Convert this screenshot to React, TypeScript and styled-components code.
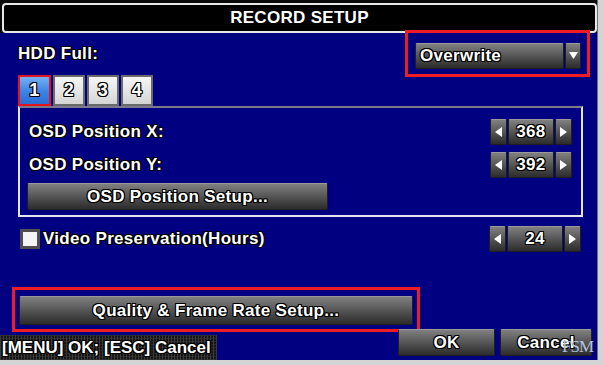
import styled, { createGlobalStyle } from "styled-components";

const GlobalStyle = createGlobalStyle`
  body {
    margin: 0;
    background: #d4d4d4;
  }
`;

const outline = `
  color: #fff;
  text-shadow: -1px 0 #000, 1px 0 #000, 0 -1px #000, 0 1px #000,
    1px 1px #000, -1px -1px #000, 1px -1px #000, -1px 1px #000;
`;

const Frame = styled.div`
  width: 604px;
  height: 365px;
  background: #d4d4d4;
  position: relative;
  overflow: hidden;
  font-family: "Liberation Sans", Arial, sans-serif;
  font-weight: bold;
  font-size: 17px;
  letter-spacing: 0.3px;
  white-space: nowrap;
`;

const Window = styled.div`
  width: 598px;
  height: 360px;
  background: #000080;
  display: flex;
  flex-direction: column;
  border-right: 1px solid #707070;
  box-sizing: border-box;
`;

const TitleBar = styled.div`
  background: #0a0a0a;
  padding: 3px 0 0 2px;
`;

const TitleBox = styled.div`
  height: 30px;
  box-sizing: border-box;
  border: 2px solid #e8e8e8;
  border-radius: 4px;
  background: #000;
  display: flex;
  align-items: center;
  justify-content: center;
  font-size: 17px;
  ${outline}
`;

const Row = styled.div<{ $top?: number; $left?: number; $right?: number }>`
  display: flex;
  align-items: center;
  justify-content: space-between;
  margin-top: ${(p) => p.$top ?? 0}px;
  padding-left: ${(p) => p.$left ?? 0}px;
  padding-right: ${(p) => p.$right ?? 0}px;
`;

const Label = styled.span`
  ${outline}
`;

const Highlight = styled.div<{ $pad: string }>`
  border: 3px solid #ee1c24;
  padding: ${(p) => p.$pad};
  position: relative;
  z-index: 1;
`;

const buttonFace = `
  background: linear-gradient(#808080 0%, #626262 35%, #444 70%, #2c2c2c 100%);
  border: 1px solid #1e1e1e;
  border-top-color: #9a9a9a;
  border-radius: 2px;
  box-sizing: border-box;
`;

const Dropdown = styled.div`
  width: 166px;
  height: 26px;
  display: flex;
  gap: 1px;
`;

const DropValue = styled.div`
  ${buttonFace}
  flex: 1;
  display: flex;
  align-items: center;
  padding-left: 4px;
  ${outline}
`;

const DropArrow = styled.div`
  ${buttonFace}
  width: 16px;
  display: flex;
  align-items: center;
  justify-content: center;
`;

const Tabs = styled.div`
  display: flex;
  gap: 2px;
  margin: -2px 0 0 18px;
  height: 31px;
  position: relative;
  z-index: 2;
`;

const Tab = styled.div<{ $active?: boolean }>`
  width: ${(p) => (p.$active ? 33 : 32)}px;
  box-sizing: border-box;
  border: 2px solid ${(p) => (p.$active ? "#e3141c" : "#6a6a6a")};
  background: ${(p) =>
    p.$active
      ? "linear-gradient(#74b0f4, #3f86e6 50%, #2a6cd4)"
      : "linear-gradient(#f6f6f6, #e2e2e2 60%, #d4d4d4)"};
  display: flex;
  align-items: center;
  justify-content: center;
  font-size: 18px;
  ${outline}
`;

const Panel = styled.div`
  margin-left: 18px;
  width: 565px;
  box-sizing: border-box;
  border: 2px solid #e4e4f0;
  border-top-color: #7a7a8a;
  padding: 11px 9px 5px 7px;
  display: flex;
  flex-direction: column;
`;

const PanelRow = styled.div<{ $gap?: number }>`
  display: flex;
  align-items: center;
  justify-content: space-between;
  height: 26px;
  margin-bottom: ${(p) => p.$gap ?? 0}px;
  padding-left: 2px;
`;

const Spinner = styled.div`
  display: flex;
  gap: 1px;
  height: 26px;
`;

const SpinArrow = styled.div`
  ${buttonFace}
  width: 17px;
  display: flex;
  align-items: center;
  justify-content: center;
`;

const SpinValue = styled.div<{ $w: number }>`
  ${buttonFace}
  width: ${(p) => p.$w}px;
  display: flex;
  align-items: center;
  justify-content: center;
  ${outline}
`;

const Button = styled.div<{ $w: number; $h: number }>`
  ${buttonFace}
  width: ${(p) => p.$w}px;
  height: ${(p) => p.$h}px;
  display: flex;
  align-items: center;
  justify-content: center;
  ${outline}
`;

const CheckLabel = styled.div`
  display: flex;
  align-items: center;
  gap: 3px;
`;

const Checkbox = styled.div`
  width: 20px;
  height: 20px;
  box-sizing: border-box;
  border: 3px solid #4e4e4e;
  background: #f4f4f4;
`;

const BottomRow = styled.div`
  display: flex;
  margin-top: -3px;
  height: 31px;
  padding-right: 5px;
`;

const Status = styled.div`
  align-self: flex-end;
  width: 217px;
  height: 25px;
  box-sizing: border-box;
  padding-left: 2px;
  display: flex;
  align-items: center;
  letter-spacing: 0;
  background-color: #161616;
  background-image: repeating-linear-gradient(90deg, #3a3a3a 0 1px, transparent 1px 3px),
    repeating-linear-gradient(0deg, #2a2a2a 0 1px, transparent 1px 3px);
  ${outline}
`;

const Actions = styled.div`
  margin-left: auto;
  display: flex;
  gap: 5px;
  align-items: flex-start;
  position: relative;
  z-index: 2;
`;

const Watermark = styled.span`
  position: absolute;
  right: 11px;
  bottom: 8px;
  font-family: "Liberation Serif", serif;
  font-weight: normal;
  font-size: 17px;
  letter-spacing: -1px;
  color: #b4c2de;
  z-index: 3;
`;

const Tri = ({ dir }: { dir: "left" | "right" | "down" }) => {
  const pts =
    dir === "left" ? "8,0 8,10 1,5" : dir === "right" ? "1,0 1,10 8,5" : "0,1 9,1 4.5,8";
  return (
    <svg width="9" height="10" viewBox="0 0 9 10">
      <polygon points={pts} fill="#fff" />
    </svg>
  );
};

const NumberSpinner = ({ value, w }: { value: string; w: number }) => (
  <Spinner>
    <SpinArrow>
      <Tri dir="left" />
    </SpinArrow>
    <SpinValue $w={w}>{value}</SpinValue>
    <SpinArrow>
      <Tri dir="right" />
    </SpinArrow>
  </Spinner>
);

export default function App() {
  return (
    <>
      <GlobalStyle />
      <Frame>
        <Window>
          <TitleBar>
            <TitleBox>RECORD SETUP</TitleBox>
          </TitleBar>

          <Row $top={-3} $left={18} $right={7}>
            <Label>HDD Full:</Label>
            <Highlight $pad="10px 6px 5px 7px">
              <Dropdown>
                <DropValue>Overwrite</DropValue>
                <DropArrow>
                  <Tri dir="down" />
                </DropArrow>
              </Dropdown>
            </Highlight>
          </Row>

          <Tabs>
            <Tab $active>1</Tab>
            <Tab>2</Tab>
            <Tab>3</Tab>
            <Tab>4</Tab>
          </Tabs>

          <Panel>
            <PanelRow $gap={7}>
              <Label>OSD Position X:</Label>
              <NumberSpinner value="368" w={46} />
            </PanelRow>
            <PanelRow $gap={5}>
              <Label>OSD Position Y:</Label>
              <NumberSpinner value="392" w={46} />
            </PanelRow>
            <Button $w={301} $h={27}>OSD Position Setup...</Button>
          </Panel>

          <Row $top={9} $left={20} $right={16}>
            <CheckLabel>
              <Checkbox />
              <Label>Video Preservation(Hours)</Label>
            </CheckLabel>
            <NumberSpinner value="24" w={56} />
          </Row>

          <Row $top={35} $left={12}>
            <Highlight $pad="6px 4px 4px 4px">
              <Button $w={394} $h={29}>Quality &amp; Frame Rate Setup...</Button>
            </Highlight>
          </Row>

          <BottomRow>
            <Status>[MENU] OK; [ESC] Cancel</Status>
            <Actions>
              <Button $w={97} $h={27}>OK</Button>
              <Button $w={92} $h={27}>Cancel</Button>
            </Actions>
          </BottomRow>
        </Window>
        <Watermark>FSM</Watermark>
      </Frame>
    </>
  );
}
